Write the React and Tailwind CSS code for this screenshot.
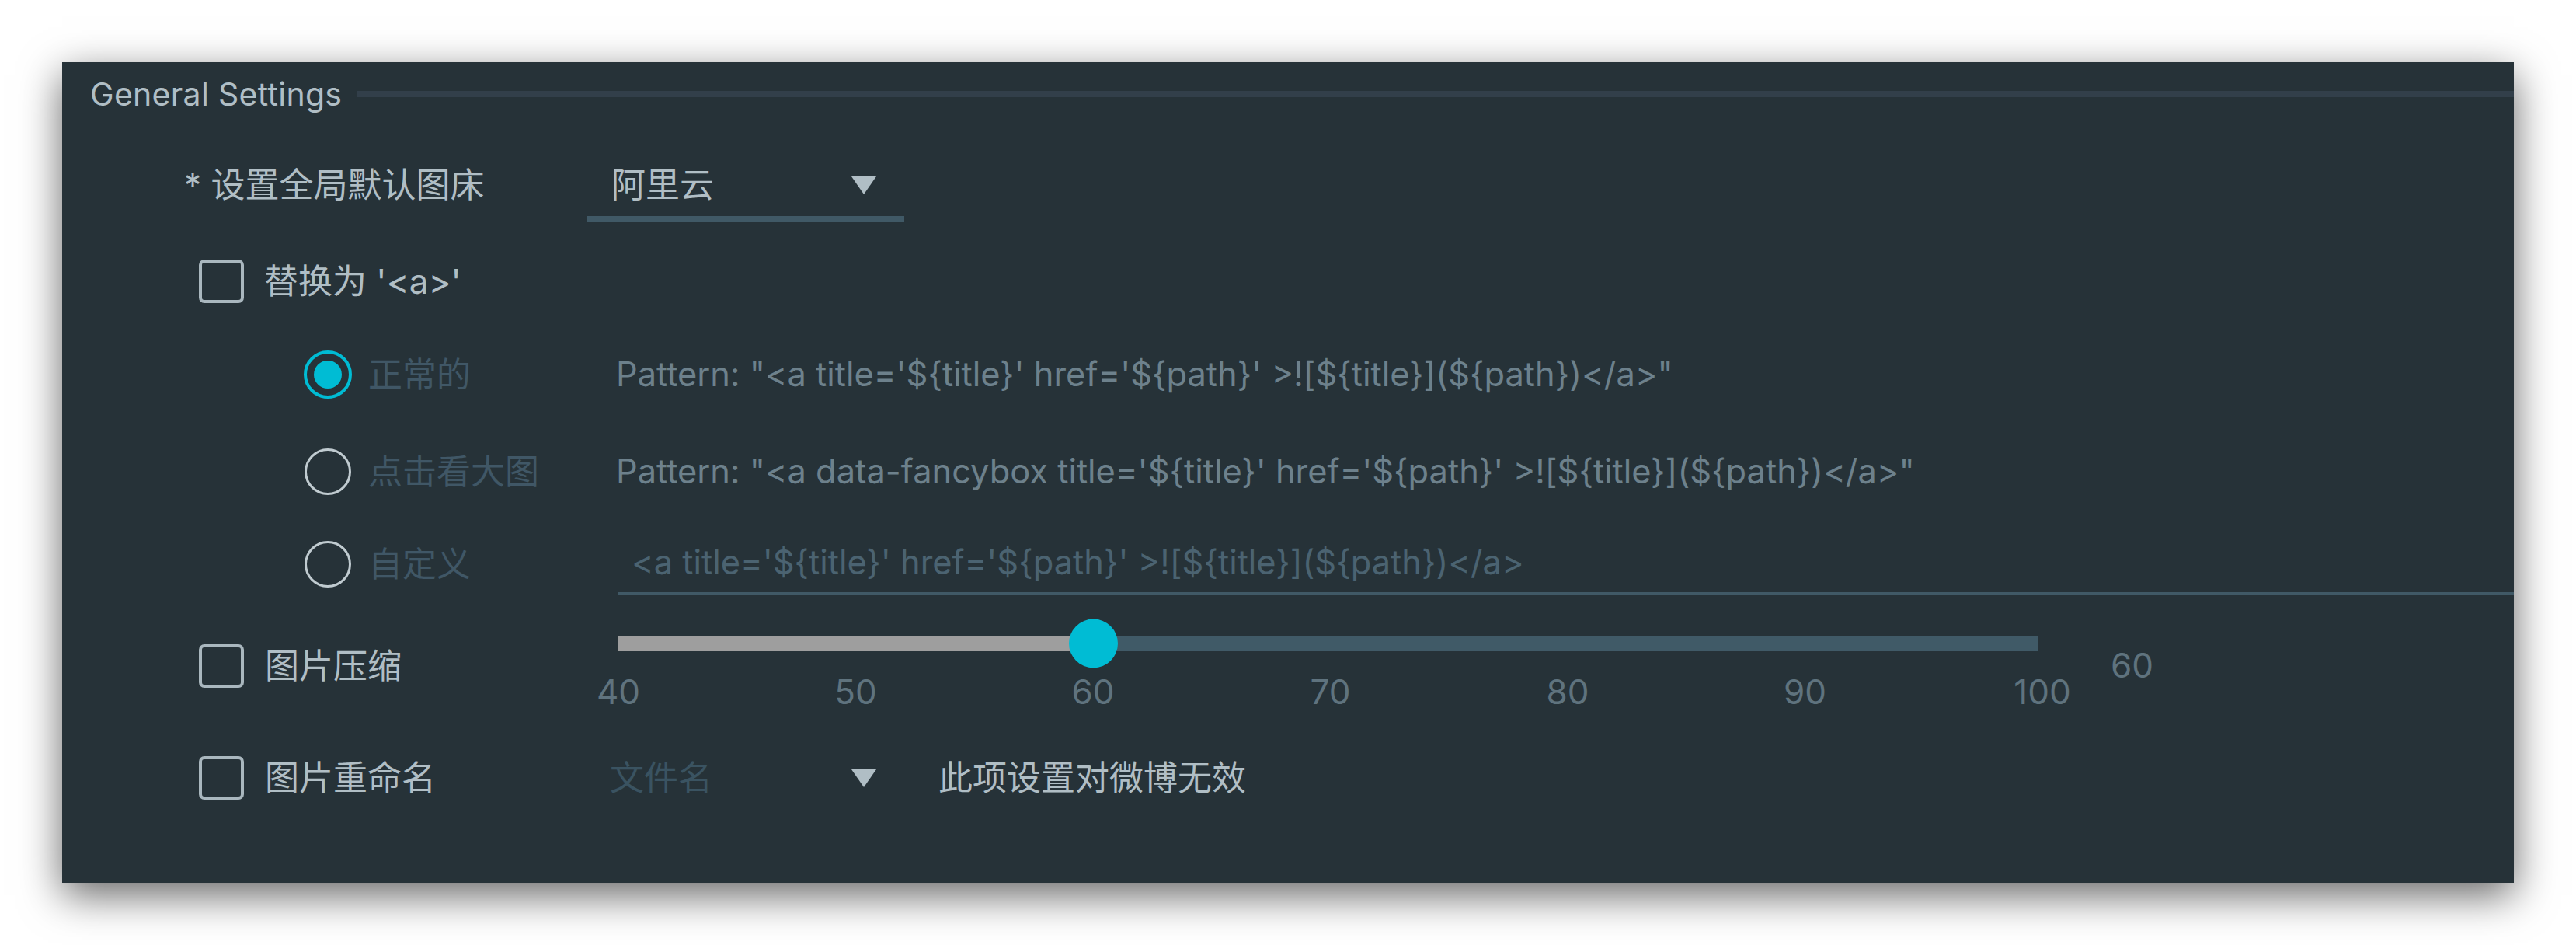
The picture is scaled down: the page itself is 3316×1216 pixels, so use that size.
import React from "react";

const Tri = () => (
  <svg width="32" height="23" viewBox="0 0 32 23" className="shrink-0">
    <polygon points="0,0 32,0 16,23" fill="#b0bec5" />
  </svg>
);

const Checkbox = () => (
  <div className="w-[58px] h-[56px] rounded-[7px] border-[4px] border-[#a9b7be] shrink-0" />
);

const Radio = ({ checked }) =>
  checked ? (
    <div className="w-[62px] h-[62px] rounded-full border-[4px] border-[#00bcd4] flex items-center justify-center shrink-0">
      <div className="w-[36px] h-[36px] rounded-full bg-[#00bcd4]" />
    </div>
  ) : (
    <div className="w-[60px] h-[60px] mx-[1px] rounded-full border-[3px] border-[#c0cbd0] shrink-0" />
  );

const ticks = ["40", "50", "60", "70", "80", "90", "100"];

export default function App() {
  return (
    <div className="w-[3316px] h-[1216px] bg-white pl-[80px] pt-[80px] overflow-hidden">
      <div className="w-[3156px] h-[1056px] bg-[#263238] shadow-[0_16px_50px_rgba(0,0,0,0.6)] flex flex-col font-['Inter','Noto_Sans_CJK_SC',sans-serif] text-[44px] leading-none">
        {/* legend */}
        <div className="h-[82px] flex items-center pl-[36px]">
          <span className="text-[41px] tracking-[0.3px] text-[#b0bec5] whitespace-nowrap">General Settings</span>
          <div className="flex-1 h-[8px] bg-[#323f4a] ml-[20px]" />
        </div>

        {/* default host */}
        <div className="mt-[36px] h-[88px] flex items-start">
          <div className="w-[676px] h-[80px] flex items-center pl-[157px] text-[#b0bec5] whitespace-nowrap">
            * 设置全局默认图床
          </div>
          <div className="w-[408px] h-[88px] border-b-[8px] border-[#405966] flex items-center justify-between pl-[31px] pr-[36px]">
            <span className="text-[#b0bec5]">阿里云</span>
            <Tri />
          </div>
        </div>

        {/* replace with <a> */}
        <div className="mt-[36px] h-[80px] flex items-center pl-[176px] gap-[26px]">
          <Checkbox />
          <span className="text-[#b0bec5] whitespace-nowrap">替换为 '&lt;a&gt;'</span>
        </div>

        {/* radio normal */}
        <div className="mt-[40px] h-[80px] flex items-center pl-[311px]">
          <Radio checked />
          <span className="ml-[21px] w-[319px] text-[#405766] whitespace-nowrap">正常的</span>
          <span className="text-[43.4px] text-[#6d818c] whitespace-nowrap">
            Pattern: "&lt;a title='${"{title}"}' href='${"{path}"}' &gt;![${"{title}"}](${"{path}"})&lt;/a&gt;"
          </span>
        </div>

        {/* radio fancybox */}
        <div className="mt-[45px] h-[80px] flex items-center pl-[311px]">
          <Radio />
          <span className="ml-[21px] w-[319px] text-[#405766] whitespace-nowrap">点击看大图</span>
          <span className="text-[43.4px] text-[#6d818c] whitespace-nowrap">
            Pattern: "&lt;a data-fancybox title='${"{title}"}' href='${"{path}"}' &gt;![${"{title}"}](${"{path}"})&lt;/a&gt;"
          </span>
        </div>

        {/* radio custom */}
        <div className="mt-[39px] h-[80px] flex items-center pl-[311px]">
          <Radio />
          <span className="ml-[21px] w-[322px] text-[#405766] whitespace-nowrap">自定义</span>
          <div className="flex-1 h-[80px] border-b-[4px] border-[#405966] pl-[17px] flex items-center text-[43.4px] text-[#4b6371] whitespace-nowrap">
            &lt;a title='${"{title}"}' href='${"{path}"}' &gt;![${"{title}"}](${"{path}"})&lt;/a&gt;
          </div>
        </div>

        {/* compression slider */}
        <div className="mt-[32px] h-[117px] flex items-start">
          <div className="w-[716px] h-[80px] mt-[19px] flex items-center pl-[176px] gap-[27px]">
            <Checkbox />
            <span className="text-[#b0bec5] whitespace-nowrap">图片压缩</span>
          </div>
          <div className="w-[1833px] flex flex-col">
            <div className="relative h-[60px] flex items-center">
              <div className="w-[1828px] h-[20px] flex">
                <div className="w-[612px] h-full bg-[#9e9e9e]" />
                <div className="flex-1 h-full bg-[#405a67]" />
              </div>
              <div className="absolute left-[580px] top-1/2 -translate-y-1/2 w-[63px] h-[63px] rounded-full bg-[#00bcd4]" />
            </div>
            <div className="mt-[7px] h-[50px] flex justify-between">
              {ticks.map((t) => (
                <div key={t} className="w-0 flex justify-center items-center">
                  <span className="text-[#5f737e] whitespace-nowrap">{t}</span>
                </div>
              ))}
            </div>
          </div>
          <div className="ml-[88px] mt-[30px] h-[56px] flex items-center text-[#5f737e]">60</div>
        </div>

        {/* rename */}
        <div className="mt-[46px] h-[80px] flex items-center">
          <div className="w-[676px] h-[80px] flex items-center pl-[176px] gap-[27px]">
            <Checkbox />
            <span className="text-[#b0bec5] whitespace-nowrap">图片重命名</span>
          </div>
          <div className="w-[408px] h-[80px] flex items-center justify-between pl-[29px] pr-[36px]">
            <span className="text-[#3a5361]">文件名</span>
            <Tri />
          </div>
          <span className="ml-[44px] text-[#b0bec5] whitespace-nowrap">此项设置对微博无效</span>
        </div>
      </div>
    </div>
  );
}
